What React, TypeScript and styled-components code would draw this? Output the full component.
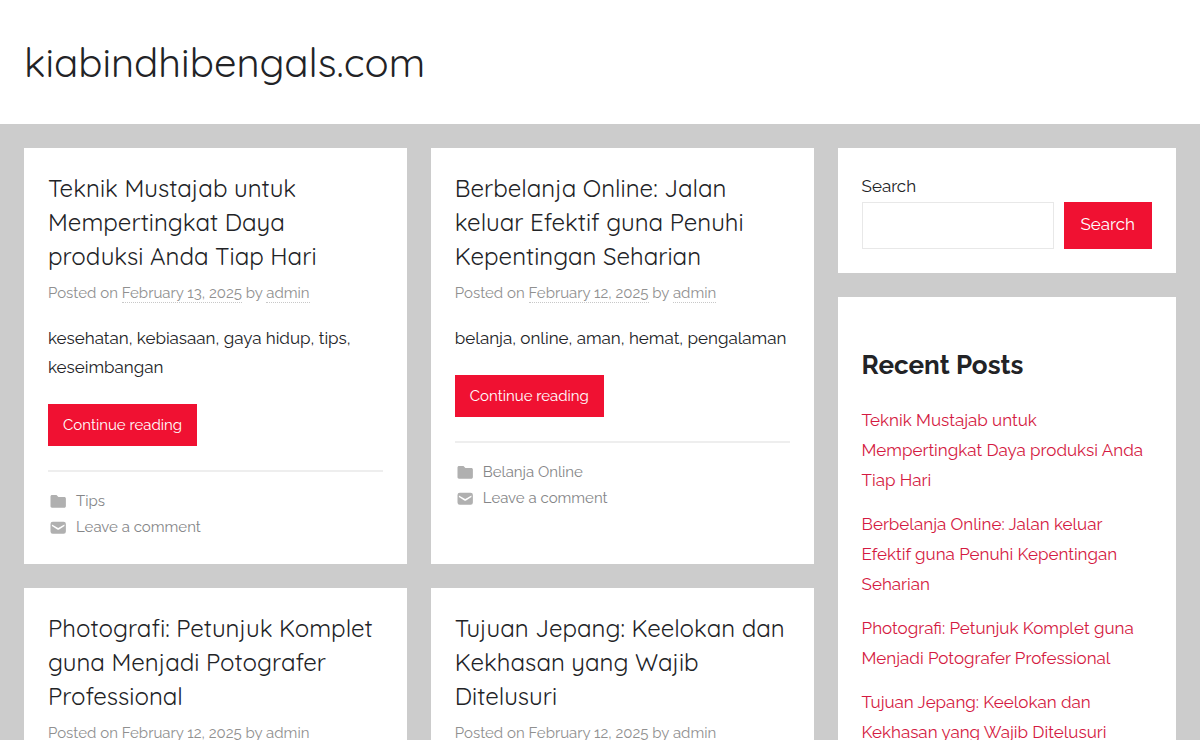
import React from "react";
import styled, { createGlobalStyle } from "styled-components";

const headingFont = `Quicksand, Lato, "Open Sans", sans-serif`;
const bodyFont = `Raleway, Lato, "Open Sans", sans-serif`;

const GlobalStyle = createGlobalStyle`
  *, *::before, *::after { box-sizing: border-box; }
  body {
    margin: 0;
    background: #ccc;
    color: #222326;
    font-family: ${bodyFont};
    font-size: 17px;
    line-height: 29px;
  }
`;

const Header = styled.header`
  background: #fff;
  padding: 32px 24px;
`;

const SiteTitle = styled.p`
  margin: 0;
  font-family: ${headingFont};
  font-size: 40px;
  font-weight: 400;
  line-height: 60px;
  a { color: inherit; text-decoration: none; }
`;

const Page = styled.div`
  display: grid;
  grid-template-columns: minmax(0, 7fr) minmax(0, 3fr);
  gap: 24px;
  padding: 24px;
  align-items: start;
`;

const Posts = styled.main`
  display: grid;
  grid-template-columns: repeat(2, minmax(0, 1fr));
  gap: 24px;
`;

const Sidebar = styled.aside`
  display: flex;
  flex-direction: column;
  gap: 24px;
`;

const Card = styled.article`
  background: #fff;
  padding: 23px 24px 24px;
`;

const PostTitle = styled.h2`
  margin: 0 0 7px;
  font-family: ${headingFont};
  font-size: 24px;
  font-weight: 400;
  line-height: 34px;
  a { color: inherit; text-decoration: none; }
`;

const PostMeta = styled.div`
  margin-bottom: 18px;
  color: #909090;
  font-size: 15px;
  line-height: 26px;
  a {
    color: inherit;
    text-decoration: none;
    border-bottom: 1px dotted #c8c8c8;
  }
`;

const Excerpt = styled.p`
  margin: 0 0 22px;
`;

const ReadMore = styled.a`
  display: inline-block;
  padding: 0 15px;
  background: #f01132;
  color: #fff;
  font-size: 15px;
  line-height: 42px;
  text-decoration: none;
  vertical-align: top;
`;

const PostFooter = styled.footer`
  margin-top: 24px;
  padding-top: 16px;
  border-top: 2px solid #eee;
`;

const FooterLink = styled.a`
  display: flex;
  align-items: center;
  gap: 8px;
  color: #858688;
  font-size: 15px;
  line-height: 26px;
  text-decoration: none;
  svg {
    width: 20px;
    height: 18px;
    fill: #b0b0b0;
  }
`;

const Widget = styled.section`
  background: #fff;
  padding: 24px;
`;

const SearchLabel = styled.label`
  display: block;
  margin-bottom: 2px;
  line-height: 28px;
`;

const SearchRow = styled.div`
  display: flex;
  gap: 10px;
`;

const SearchInput = styled.input`
  flex: 1;
  min-width: 0;
  height: 47px;
  padding: 8px;
  border: 1px solid #e8e8e8;
  border-radius: 0;
  background: #fff;
  font: inherit;
`;

const SearchButton = styled.button`
  height: 47px;
  padding: 0 17px 2px;
  border: 0;
  background: #f01132;
  color: #fff;
  font: inherit;
`;

const WidgetTitle = styled.h2`
  margin: 28px 0 24px;
  font-size: 26px;
  font-weight: 700;
  line-height: 32px;
`;

const RecentList = styled.ul`
  display: flex;
  flex-direction: column;
  gap: 14px;
  margin: 0;
  padding: 0;
  list-style: none;
  line-height: 30px;
  a { color: #d41a42; text-decoration: none; }
`;

const FolderIcon = () => (
  <svg viewBox="0 0 24 24" aria-hidden="true">
    <path d="M10 4H4c-1.100 0-2 .9-2 2v13c0 1 .9 2 2 2h16.500c1 0 2-.9 2-2V8.500c0-1.100-.9-2-2-2h-8L10 4z" />
  </svg>
);

const MailIcon = () => (
  <svg viewBox="0 0 24 24" aria-hidden="true">
    <path
      fillRule="evenodd"
      d="M5 5h14.500a3 3 0 0 1 3 3v10a3 3 0 0 1-3 3H5a3 3 0 0 1-3-3V8a3 3 0 0 1 3-3zM3.900 8.500v2.200L11 15.200a2.300 2.300 0 0 0 2.500 0l7.100-4.500V8.500L12.900 13a1.200 1.200 0 0 1-1.300 0z"
    />
  </svg>
);

type Post = { title: string; date: string; excerpt: string; category: string };

const posts: Post[] = [
  {
    title: "Teknik Mustajab untuk Mempertingkat Daya produksi Anda Tiap Hari",
    date: "February 13, 2025",
    excerpt: "kesehatan, kebiasaan, gaya hidup, tips, keseimbangan",
    category: "Tips",
  },
  {
    title: "Berbelanja Online: Jalan keluar Efektif guna Penuhi Kepentingan Seharian",
    date: "February 12, 2025",
    excerpt: "belanja, online, aman, hemat, pengalaman",
    category: "Belanja Online",
  },
  {
    title: "Photografi: Petunjuk Komplet guna Menjadi Potografer Professional",
    date: "February 12, 2025",
    excerpt: "",
    category: "",
  },
  {
    title: "Tujuan Jepang: Keelokan dan Kekhasan yang Wajib Ditelusuri",
    date: "February 12, 2025",
    excerpt: "",
    category: "",
  },
];

const PostCard = ({ post }: { post: Post }) => (
  <Card>
    <PostTitle>
      <a href="#post">{post.title}</a>
    </PostTitle>
    <PostMeta>
      Posted on <a href="#date">{post.date}</a> by <a href="#author">admin</a>
    </PostMeta>
    {post.excerpt && (
      <>
        <Excerpt>{post.excerpt}</Excerpt>
        <ReadMore href="#post">Continue reading</ReadMore>
        <PostFooter>
          <FooterLink href="#category">
            <FolderIcon />
            {post.category}
          </FooterLink>
          <FooterLink href="#respond">
            <MailIcon />
            Leave a comment
          </FooterLink>
        </PostFooter>
      </>
    )}
  </Card>
);

export default function App() {
  return (
    <>
      <GlobalStyle />
      <Header>
        <SiteTitle>
          <a href="#home">kiabindhibengals.com</a>
        </SiteTitle>
      </Header>
      <Page>
        <Posts>
          {posts.map((post) => (
            <PostCard key={post.title} post={post} />
          ))}
        </Posts>
        <Sidebar>
          <Widget as="form" role="search">
            <SearchLabel htmlFor="search">Search</SearchLabel>
            <SearchRow>
              <SearchInput id="search" type="search" />
              <SearchButton type="button">Search</SearchButton>
            </SearchRow>
          </Widget>
          <Widget>
            <WidgetTitle>Recent Posts</WidgetTitle>
            <RecentList>
              {posts.map((post) => (
                <li key={post.title}>
                  <a href="#post">{post.title}</a>
                </li>
              ))}
            </RecentList>
          </Widget>
        </Sidebar>
      </Page>
    </>
  );
}
